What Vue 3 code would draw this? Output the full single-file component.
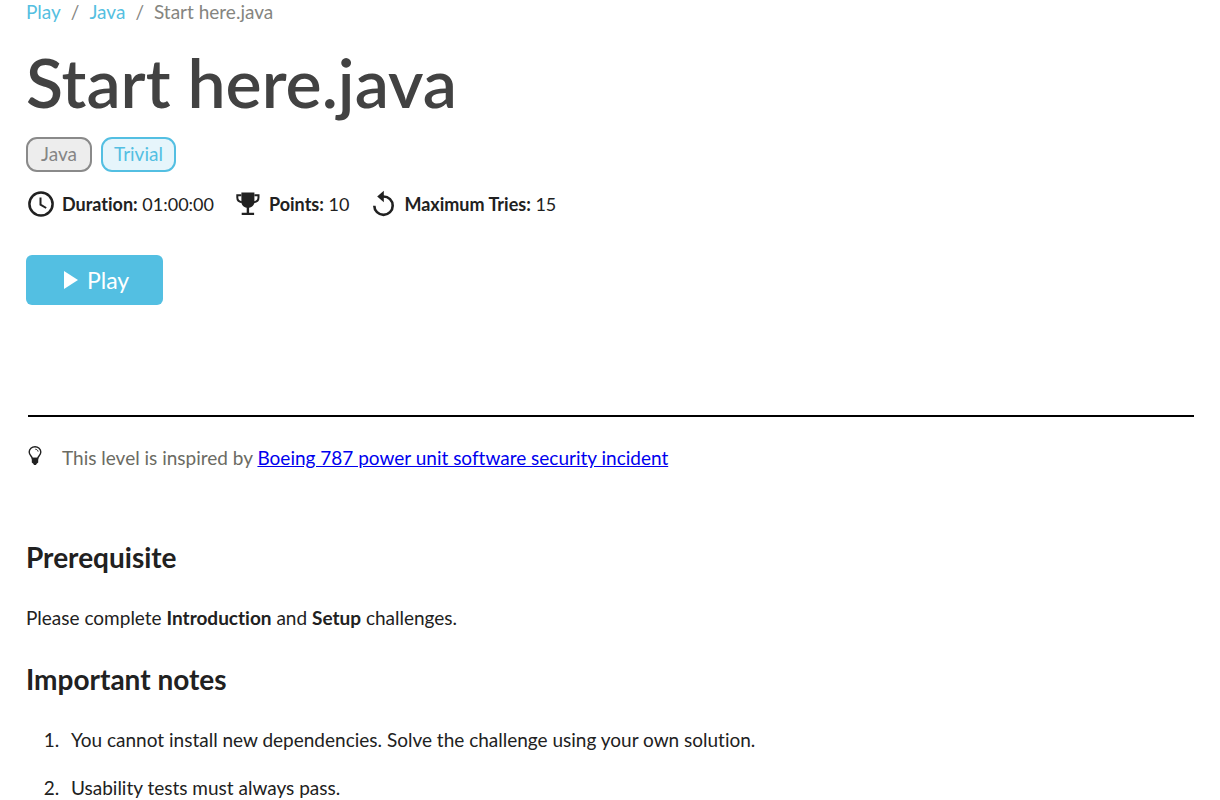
<script setup>
const crumbs = ['Play', 'Java']
const notes = [
  'You cannot install new dependencies. Solve the challenge using your own solution.',
  'Usability tests must always pass.',
]
</script>

<template>
  <main class="page">
    <nav class="crumbs" aria-label="Breadcrumb">
      <template v-for="crumb in crumbs" :key="crumb">
        <a href="#">{{ crumb }}</a>
        <span class="slash">/</span>
      </template>
      <span>Start here.java</span>
    </nav>

    <h1>Start here.java</h1>

    <div class="tags">
      <span class="tag">Java</span>
      <span class="tag level">Trivial</span>
    </div>

    <div class="facts">
      <div class="fact">
        <svg class="icon" viewBox="0 0 30 30" aria-hidden="true">
          <circle cx="15" cy="15" r="11.6" fill="none" stroke="currentColor" stroke-width="2.5" />
          <path d="M14.500 8.500v7.200l5.700 3.300" fill="none" stroke="currentColor" stroke-width="2" />
        </svg>
        <span><strong>Duration:</strong> 01:00:00</span>
      </div>
      <div class="fact">
        <svg class="icon" viewBox="0 0 30 30" aria-hidden="true">
          <path d="M8.4 3.4h13v9.2c0 3.600-2.300 5.600-5.300 6.200v5h5v2.300h-12.400v-2.300h5v-5c-3-.6-5.300-2.600-5.300-6.200z" fill="currentColor" />
          <path d="M8.400 6.300H4.300v2.200c0 2.700 1.700 4.400 4.600 4.700M21.400 6.300h4.100v2.200c0 2.700-1.700 4.400-4.600 4.700" fill="none" stroke="currentColor" stroke-width="2" />
        </svg>
        <span><strong>Points:</strong> 10</span>
      </div>
      <div class="fact">
        <svg class="icon" viewBox="0 0 30 30" aria-hidden="true">
          <path d="M13.500 7.500H15.500a9.200 9.200 0 1 1-9.200 9.200" fill="none" stroke="currentColor" stroke-width="2.600" />
          <path d="M15.800 1.700v11.600L9.200 7.500z" fill="currentColor" />
        </svg>
        <span><strong>Maximum Tries:</strong> 15</span>
      </div>
    </div>

    <button class="play" type="button">
      <svg width="14" height="18" viewBox="0 0 14 18" aria-hidden="true">
        <path d="M0 0l14 9-14 9z" fill="currentColor" />
      </svg>
      Play
    </button>

    <hr />

    <p class="hint">
      <svg width="14" height="20" viewBox="0 0 14 20" aria-hidden="true">
        <path d="M4.300 12.500C4.200 10.300 1.200 9.300 1.200 6a5.800 5.300 0 0 1 11.600 0c0 3.300-3 4.300-3.100 6.500z" fill="none" stroke="currentColor" stroke-width="1.400" />
        <path d="M3.800 11.800h6.400v4.700l-1.500 1.200-.7 1.200H6l-.7-1.200-1.500-1.200z" fill="currentColor" />
        <path d="M7.300 3.200c1.500.1 2.600 1.100 2.800 2.400" fill="none" stroke="currentColor" stroke-width="1" />
      </svg>
      <span>This level is inspired by <a href="#">Boeing 787 power unit software security incident</a></span>
    </p>

    <h2>Prerequisite</h2>
    <p class="body">Please complete <strong>Introduction</strong> and <strong>Setup</strong> challenges.</p>

    <h2>Important notes</h2>
    <ol>
      <li v-for="note in notes" :key="note">{{ note }}</li>
    </ol>
  </main>
</template>

<style>
body {
  background: #fff;
}
html {
  overflow: hidden;
}
</style>

<style scoped>
.page {
  padding: 0 26px;
  font-family: Lato, "Open Sans", sans-serif;
  font-size: 19px;
  line-height: 24px;
  font-variant-ligatures: none;
  color: #212121;
}
.crumbs {
  display: flex;
  gap: 10px;
  color: #85857f;
}
.crumbs a {
  color: #55bfe1;
  text-decoration: none;
}
h1 {
  margin: 18px 0 15px;
  font-size: 68px;
  line-height: 80px;
  font-weight: 600;
  color: #424242;
}
.tags {
  display: flex;
  gap: 9px;
}
.tag {
  box-sizing: border-box;
  min-width: 66px;
  height: 35px;
  padding: 0 11px;
  border: 2px solid #8a8a8a;
  border-radius: 11px;
  background: #ededed;
  color: #858585;
  line-height: 30px;
  text-align: center;
}
.level {
  border-color: #53bfe2;
  background: #e6f5fb;
  color: #53bfe2;
}
.facts {
  display: flex;
  gap: 19px;
  margin-top: 17px;
  font-size: 18px;
}
.fact {
  display: flex;
  align-items: center;
  gap: 6px;
}
.icon {
  width: 30px;
  height: 30px;
}
strong {
  font-weight: 700;
}
.play {
  display: flex;
  align-items: center;
  gap: 9px;
  height: 50px;
  margin-top: 36px;
  padding: 0 34px 0 38px;
  border: 0;
  border-radius: 6px;
  background: #53bfe2;
  color: #fff;
  font: inherit;
  font-size: 23px;
}
hr {
  height: 2px;
  margin: 110px 0 29px 2px;
  border: 0;
  background: #000;
}
.hint {
  display: flex;
  gap: 20px;
  margin: 0 0 71px 2px;
  color: #6b6b63;
}
.hint svg {
  flex: none;
  color: #212121;
}
.hint a {
  color: #0000ee;
}
h2 {
  margin: 0 0 33px;
  font-size: 28px;
  line-height: 32px;
  font-weight: 700;
}
.body {
  margin: 0 0 33px;
}
ol {
  margin: 0;
  padding-left: 38px;
}
li {
  margin-bottom: 24px;
  padding-left: 7px;
}
</style>
